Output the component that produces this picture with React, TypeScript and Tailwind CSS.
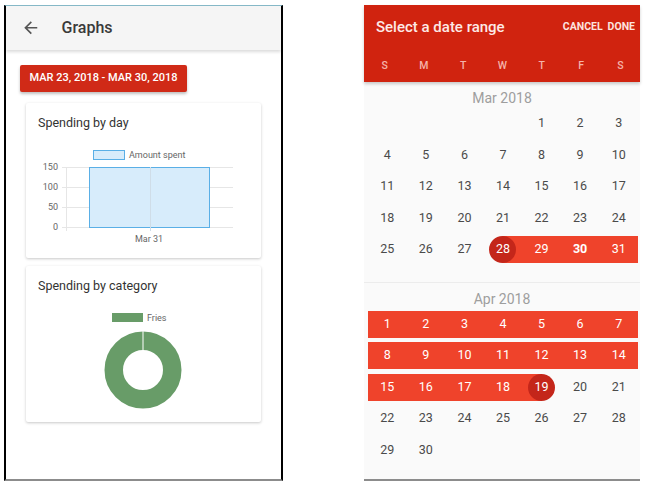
import React from 'react';

const weekDays = ['S', 'M', 'T', 'W', 'T', 'F', 'S'];

type Day = { n: number | null; band?: 'full' | 'start' | 'end'; circle?: boolean; bold?: boolean };

const buildMonth = (offset: number, days: number, range: (d: number) => Day): Day[][] => {
  const cells: Day[] = [];
  for (let i = 0; i < offset; i++) cells.push({ n: null });
  for (let d = 1; d <= days; d++) cells.push(range(d));
  while (cells.length % 7) cells.push({ n: null });
  const rows: Day[][] = [];
  for (let i = 0; i < cells.length; i += 7) rows.push(cells.slice(i, i + 7));
  return rows;
};

const march = buildMonth(4, 31, (d) => {
  if (d === 28) return { n: d, band: 'start', circle: true };
  if (d > 28) return { n: d, band: 'full', bold: d === 30 };
  return { n: d };
});

const april = buildMonth(0, 30, (d) => {
  if (d === 19) return { n: d, band: 'end', circle: true };
  if (d < 19) return { n: d, band: 'full' };
  return { n: d };
});

const DayCell: React.FC<{ day: Day }> = ({ day }) => {
  if (day.n === null) return <div className="h-[31.5px]" />;
  const inRange = !!day.band;
  return (
    <div className="h-[31.5px] relative flex items-center justify-center">
      {day.band === 'full' && <div className="absolute left-0 right-0 h-[27px] bg-[#ef432b]" />}
      {day.band === 'start' && <div className="absolute left-1/2 right-0 h-[27px] bg-[#ef432b]" />}
      {day.band === 'end' && <div className="absolute left-0 right-1/2 h-[27px] bg-[#ef432b]" />}
      {day.circle && <div className="absolute w-[27px] h-[27px] rounded-full bg-[#c4261a]" />}
      <span
        className={`relative text-[12.5px] ${inRange ? 'text-white' : 'text-[#4a4a4a]'} ${day.bold ? 'font-bold' : ''}`}
      >
        {day.n}
      </span>
    </div>
  );
};

const Month: React.FC<{ label: string; rows: Day[][] }> = ({ label, rows }) => (
  <div className="pt-[6px]">
    <div className="h-[20px] leading-[20px] text-center text-[14px] text-[#9e9e9e]">{label}</div>
    <div className="pl-[4px] pr-[2px]">
      {rows.map((row, i) => (
        <div key={i} className="grid grid-cols-7">
          {row.map((d, j) => (
            <DayCell key={j} day={d} />
          ))}
        </div>
      ))}
    </div>
  </div>
);

const BarChart = () => (
  <svg width="235" height="120" className="block">
    <rect x="67.5" y="19.5" width="31" height="9" fill="#d7ecfb" stroke="#5aafe6" strokeWidth="1" />
    <text x="103" y="27" fontSize="9" fill="#666">Amount spent</text>
    {[36, 56, 76, 96].map((y, i) => (
      <g key={y}>
        <line x1="36" x2="207" y1={y + 0.5} y2={y + 0.5} stroke="#e6e6e6" />
        <text x="32" y={y + 3} fontSize="9" fill="#666" textAnchor="end">
          {['150', '100', '50', '0'][i]}
        </text>
      </g>
    ))}
    <line x1="40.5" x2="40.5" y1="36" y2="100" stroke="#e6e6e6" />
    <rect x="63.5" y="36.5" width="120" height="60" fill="#d7ecfb" stroke="#5aafe6" strokeWidth="1" />
    <line x1="124.5" x2="124.5" y1="36" y2="100" stroke="#cfdde8" />
    <text x="123" y="111" fontSize="9" fill="#666" textAnchor="middle">Mar 31</text>
  </svg>
);

const DonutChart = () => (
  <svg width="235" height="122" className="block">
    <rect x="86" y="19" width="31" height="9" fill="#689c68" />
    <text x="121" y="27" fontSize="9" fill="#666">Fries</text>
    <circle cx="117" cy="76" r="29.25" fill="none" stroke="#689c68" strokeWidth="18.5" />
    <line x1="117" x2="117" y1="37" y2="57" stroke="#fff" strokeWidth="1" />
  </svg>
);

const Card: React.FC<{ title: string; children: React.ReactNode; className?: string }> = ({ title, children, className }) => (
  <div className={`w-[235px] bg-white rounded-[2px] shadow-[0_1px_3px_rgba(0,0,0,0.22)] ${className ?? ''}`}>
    <div className="pt-[12px] px-[12px] text-[12.5px] leading-[16px] text-[#333]">{title}</div>
    {children}
  </div>
);

export default function App() {
  return (
    <div className="w-[647px] h-[485px] bg-white flex items-start font-['Roboto',sans-serif]">
      {/* left phone */}
      <div className="ml-[4px] mt-[5px] w-[279px] h-[476px] border-x-2 border-black border-t border-t-[#86b9c8] border-b-2 border-b-[#8c8c8c] bg-white flex flex-col">
        <div className="h-[44px] shrink-0 bg-[#f5f5f5] shadow-[0_2px_3px_rgba(0,0,0,0.14)] flex items-center relative z-10">
          <svg width="19.5" height="19.5" viewBox="0 0 24 24" className="ml-[15px]">
            <path d="M20 11H7.83l5.59-5.59L12 4l-8 8 8 8 1.41-1.41L7.83 13H20v-2z" fill="#555" />
          </svg>
          <span className="ml-[21px] text-[16px] font-medium text-[#3a3a3a]">Graphs</span>
        </div>
        <div className="pt-[15px] pl-[14px]">
          <div className="w-[167px] h-[27px] bg-[#d02a17] rounded-[2px] shadow-[0_2px_3px_rgba(0,0,0,0.25)] flex items-center justify-center text-white text-[11px] font-medium">
            MAR 23, 2018 - MAR 30, 2018
          </div>
        </div>
        <div className="pl-[20px] pt-[11px] flex flex-col gap-[8px]">
          <Card title="Spending by day" className="h-[155px]">
            <BarChart />
          </Card>
          <Card title="Spending by category" className="h-[156px]">
            <DonutChart />
          </Card>
        </div>
      </div>

      {/* right phone */}
      <div className="ml-[81px] mt-[5px] w-[276px] h-[476px] bg-[#fafafa] border-b-2 border-b-[#8c8c8c] flex flex-col">
        <div className="h-[77px] shrink-0 bg-[#d0230f] shadow-[0_2px_3px_rgba(0,0,0,0.2)] relative z-10">
          <div className="h-[44px] flex items-center justify-between pl-[12px] pr-[5px]">
            <span className="text-[15px] font-medium text-[#fde9e6]">Select a date range</span>
            <div className="flex gap-[5px] text-[10.5px] font-bold text-[#fde3df]">
              <span>CANCEL</span>
              <span>DONE</span>
            </div>
          </div>
          <div className="h-[33px] grid grid-cols-7 pl-[1px] items-center">
            {weekDays.map((w, i) => (
              <span key={i} className="text-center text-[10.5px] font-medium text-[#f5b3aa]">
                {w}
              </span>
            ))}
          </div>
        </div>
        <div className="pb-[16px] border-b border-[#ececec]">
          <Month label="Mar 2018" rows={march} />
        </div>
        <Month label="Apr 2018" rows={april} />
      </div>
    </div>
  );
}
